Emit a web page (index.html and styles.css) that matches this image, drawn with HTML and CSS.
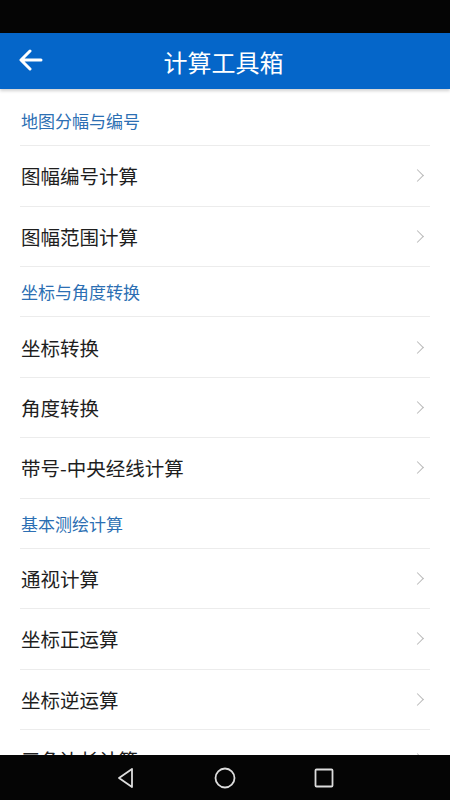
FILE: index.html
```html
<!DOCTYPE html>
<html lang="zh-CN">
<head>
  <meta charset="UTF-8" />
  <meta name="viewport" content="width=device-width, initial-scale=1.0" />
  <title>计算工具箱</title>
  <link rel="stylesheet" href="styles.css">
</head>
<body>

  <div class="status-bar"></div>

  <header class="app-bar">
    <button class="back" aria-label="返回">
      <svg width="24" height="22" viewBox="0 0 24 22">
        <path d="M22 11H3M11 2L2 11l9 9" fill="none" stroke="#fff" stroke-width="3" stroke-linecap="round" stroke-linejoin="round" />
      </svg>
    </button>
    <h1>计算工具箱</h1>
  </header>

  <main class="list">
    <div class="group">地图分幅与编号</div>
    <a class="item" href="#"><span>图幅编号计算</span><i class="chevron"></i></a>
    <a class="item" href="#"><span>图幅范围计算</span><i class="chevron"></i></a>

    <div class="group">坐标与角度转换</div>
    <a class="item" href="#"><span>坐标转换</span><i class="chevron"></i></a>
    <a class="item" href="#"><span>角度转换</span><i class="chevron"></i></a>
    <a class="item" href="#"><span>带号-中央经线计算</span><i class="chevron"></i></a>

    <div class="group">基本测绘计算</div>
    <a class="item" href="#"><span>通视计算</span><i class="chevron"></i></a>
    <a class="item" href="#"><span>坐标正运算</span><i class="chevron"></i></a>
    <a class="item" href="#"><span>坐标逆运算</span><i class="chevron"></i></a>
    <a class="item" href="#"><span>三角边长计算</span><i class="chevron"></i></a>
  </main>

  <nav class="nav-bar">
    <svg width="22" height="22" viewBox="0 0 22 22">
      <path d="M17 2L4 11l13 9z" fill="none" stroke="#ddd" stroke-width="1.8" stroke-linejoin="round" />
    </svg>
    <svg width="22" height="22" viewBox="0 0 22 22">
      <circle cx="11" cy="11" r="9.5" fill="none" stroke="#ddd" stroke-width="1.8" />
    </svg>
    <svg width="22" height="22" viewBox="0 0 22 22">
      <rect x="2.5" y="2.5" width="17" height="17" rx="1" fill="none" stroke="#ddd" stroke-width="1.8" />
    </svg>
  </nav>

</body>
</html>
```

FILE: styles.css
```css
body {
  margin: 0;
  height: 800px;
  overflow: hidden;
  background-color: #fff;
  font-family: "Noto Sans CJK SC", "Noto Sans", sans-serif;
}

.status-bar {
  height: 33px;
  background-color: #050505;
}

.app-bar {
  position: relative;
  z-index: 1;
  display: flex;
  align-items: center;
  justify-content: center;
  height: 56px;
  background-color: #0566c9;
  box-shadow: 0 2px 3px rgba(0, 0, 0, 0.18);
}

.app-bar h1 {
  margin: 0 0 0 -3px;
  font-size: 24px;
  font-weight: normal;
  color: #fff;
}

.back {
  position: absolute;
  left: 19px;
  top: 16px;
  padding: 0;
  border: none;
  background: none;
  line-height: 0;
}

.list {
  padding: 7px 20px 0;
}

.group {
  display: flex;
  align-items: center;
  height: 49.3px;
  padding-left: 1px;
  border-bottom: 1px solid #ececec;
  font-size: 17px;
  color: #2c6fb3;
}

.item {
  display: flex;
  align-items: center;
  justify-content: space-between;
  height: 59.4px;
  padding-left: 1px;
  border-bottom: 1px solid #ececec;
  font-size: 19.5px;
  color: #1e1e1e;
  text-decoration: none;
}

.chevron {
  width: 8px;
  height: 8px;
  margin-right: 8px;
  border-top: 1px solid #b9b9b9;
  border-right: 1px solid #b9b9b9;
  transform: rotate(45deg);
}

.nav-bar {
  position: fixed;
  left: 0;
  right: 0;
  bottom: 0;
  display: flex;
  justify-content: center;
  align-items: center;
  gap: 77px;
  height: 45px;
  background-color: #050505;
}
```
